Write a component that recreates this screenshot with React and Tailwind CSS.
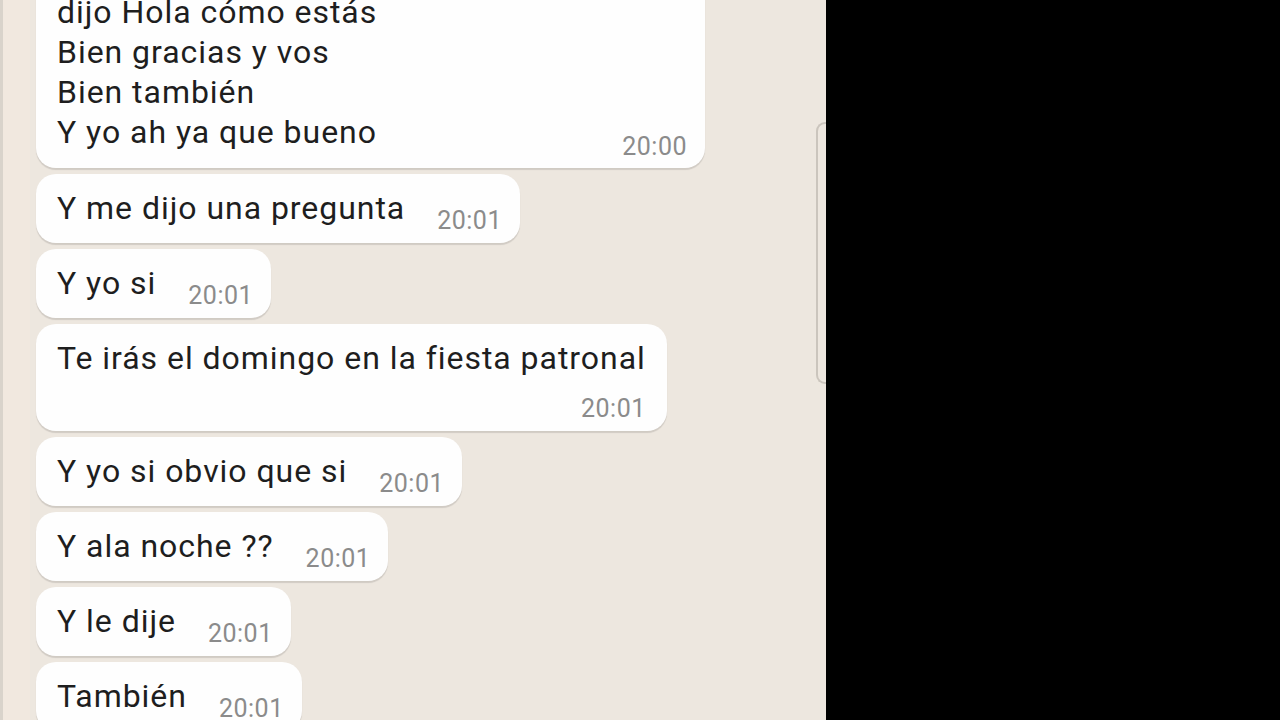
const font = { fontFamily: "Roboto, 'Noto Sans', sans-serif" };

const messages = [
  { text: "Y me dijo una pregunta", time: "20:01" },
  { text: "Y yo si", time: "20:01" },
  { text: "Te irás el domingo en la fiesta patronal", time: "20:01", wrap: true },
  { text: "Y yo si obvio que si", time: "20:01" },
  { text: "Y ala noche ??", time: "20:01" },
  { text: "Y le dije", time: "20:01" },
  { text: "También", time: "20:01" },
];

const Bubble = ({ text, time, wrap }) => {
  if (wrap) {
    return (
      <div className="self-start flex flex-col bg-[#fefefe] rounded-[20px] pl-[21px] pr-[21px] pt-[14px] pb-[10px] shadow-[0_2px_1px_rgba(0,0,0,0.12)]">
        <div className="text-[32px] leading-[40px] tracking-[0.03em] text-[#1e1e1e]">{text}</div>
        <div className="self-end mt-[19px] text-[25px] leading-[24px] tracking-[0.02em] text-[#8b8b8b]">{time}</div>
      </div>
    );
  }
  return (
    <div className="self-start flex items-end bg-[#fefefe] rounded-[20px] pl-[21px] pr-[18px] pt-[14px] pb-[15px] shadow-[0_2px_1px_rgba(0,0,0,0.12)]">
      <div className="text-[32px] leading-[40px] tracking-[0.03em] text-[#1e1e1e]">{text}</div>
      <div className="ml-[32px] mb-[-5px] text-[25px] leading-[24px] tracking-[0.02em] text-[#8b8b8b]">{time}</div>
    </div>
  );
};

export default function App() {
  return (
    <div className="w-[1280px] h-[720px] bg-black flex overflow-hidden" style={font}>
      <div className="relative w-[826px] h-[720px] bg-[#ede7df] flex overflow-hidden">
        {/* left edge strip */}
        <div className="w-[3px] h-full bg-[#d9d3cb]" />
        <div className="w-[27px] h-full bg-[#f1e8df]" />

        <div className="flex-1 pl-[6px] mt-[-48px] flex flex-col gap-[6px]">
          <div className="w-[669px] flex flex-col bg-[#fefefe] rounded-[20px] pl-[21px] pr-[18px] pt-[0px] pb-[9px] shadow-[0_2px_1px_rgba(0,0,0,0.12)]">
            <div className="text-[32px] leading-[40px] tracking-[0.03em] text-[#1e1e1e]">
              <div>Me saludó y me</div>
              <div>dijo Hola cómo estás</div>
              <div>Bien gracias y vos</div>
              <div>Bien también</div>
              <div>Y yo ah ya que bueno</div>
            </div>
            <div className="self-end mt-[-17px] text-[25px] leading-[24px] tracking-[0.02em] text-[#8b8b8b]">20:00</div>
          </div>
          {messages.map((m, i) => (
            <Bubble key={i} {...m} />
          ))}
        </div>

        {/* scrollbar */}
        <div className="absolute left-[816px] top-[122px] w-[10px] h-[262px] border-l-2 border-t-2 border-b-2 border-[#cbc5bd] rounded-l-[9px]" />
      </div>
    </div>
  );
}
